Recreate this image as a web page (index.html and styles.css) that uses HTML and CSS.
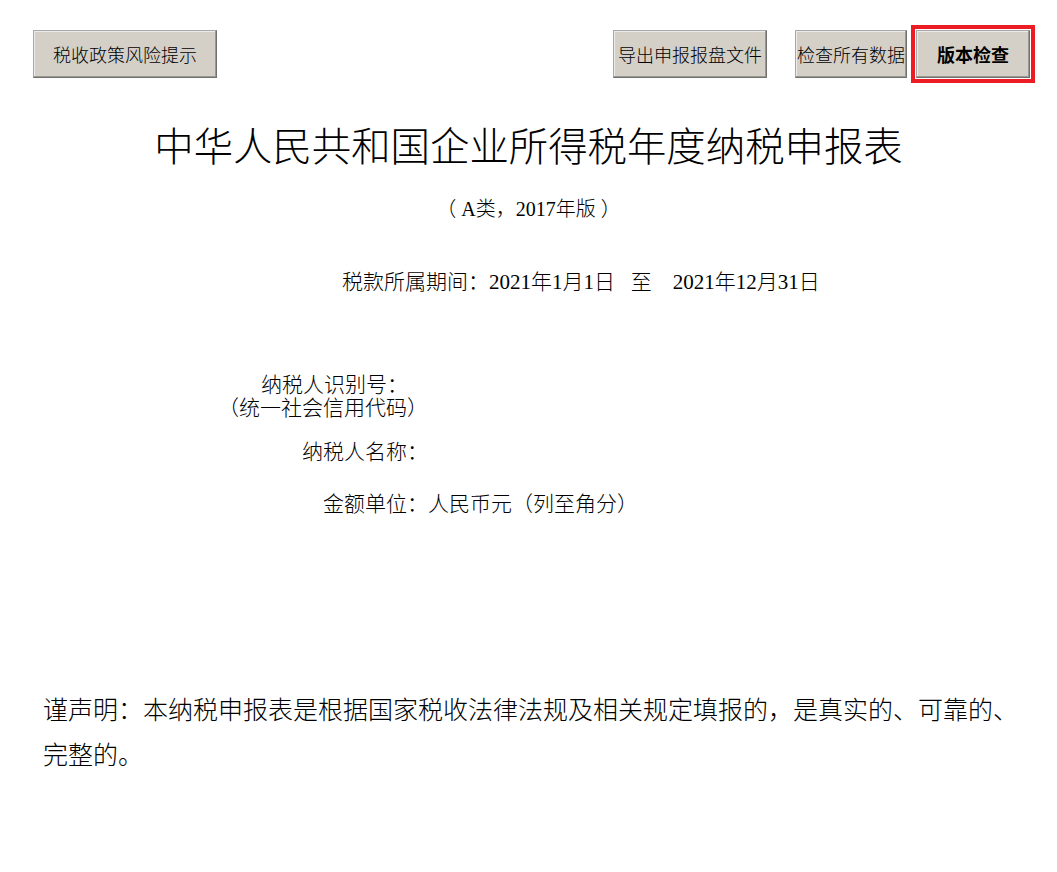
FILE: index.html
```html
<!DOCTYPE html>
<html lang="zh-CN">
<head>
    <meta charset="UTF-8">
    <title>中华人民共和国企业所得税年度纳税申报表</title>
    <link rel="stylesheet" href="styles.css">
</head>
<body>
    <div class="toolbar">
        <button class="btn btn-risk">税收政策风险提示</button>
        <div class="toolbar-right">
            <button class="btn btn-export">导出申报报盘文件</button>
            <button class="btn btn-check">检查所有数据</button>
            <div class="focus-ring">
                <button class="btn btn-version">版本检查</button>
            </div>
        </div>
    </div>

    <h1 class="title">中华人民共和国企业所得税年度纳税申报表</h1>
    <div class="subtitle">（ A类，2017年版 ）</div>

    <div class="period">税款所属期间：2021年1月1日&nbsp;&nbsp;&nbsp;至&nbsp;&nbsp;&nbsp;&nbsp;2021年12月31日</div>

    <div class="info">
        <div class="info-row">
            <div class="info-label">
                <div class="label-first">纳税人识别号：</div>
                <div>（统一社会信用代码）</div>
            </div>
            <div class="info-value"></div>
        </div>
        <div class="info-row row-name">
            <div class="info-label">纳税人名称：</div>
            <div class="info-value"></div>
        </div>
        <div class="info-row row-unit">
            <div class="info-label">金额单位：</div>
            <div class="info-value">人民币元（列至角分）</div>
        </div>
    </div>

    <p class="declare">谨声明：本纳税申报表是根据国家税收法律法规及相关规定填报的，是真实的、可靠的、完整的。</p>
</body>
</html>
```

FILE: styles.css
```css
body {
    margin: 0;
    background: #fff;
    color: #000;
    font-family: "Liberation Serif", "Noto Sans CJK SC", sans-serif;
    font-weight: 300;
}
.toolbar {
    display: flex;
    align-items: center;
    padding: 25px 22px 0 33px;
    height: 57px;
}
.toolbar-right {
    display: flex;
    align-items: center;
    margin-left: auto;
}
.btn {
    height: 48px;
    padding: 0;
    background: #d4d0c8;
    border: 1px solid #a8a8a8;
    border-right-color: #707070;
    border-bottom-color: #707070;
    box-shadow: inset -1px -1px 0 #9a9890, inset 1px 1px 0 #ecebe7;
    font-family: "Noto Sans CJK SC", sans-serif;
    font-weight: 300;
    font-size: 18px;
    color: #000;
    white-space: nowrap;
}
.btn-risk {
    width: 184px;
}
.btn-export {
    width: 154px;
}
.btn-check {
    width: 112px;
    margin-left: 28px;
}
.focus-ring {
    margin-left: 4px;
    border: 4px solid #ec1c24;
    padding: 1px;
    background: #fff;
}
.btn-version {
    width: 114px;
    font-weight: bold;
}
.title {
    margin: 43px 0 0;
    text-align: center;
    font-size: 39.4px;
    font-weight: 300;
    line-height: 47px;
}
.subtitle {
    margin-top: 25px;
    text-align: center;
    font-size: 20px;
    line-height: 24px;
}
.period {
    margin-top: 49px;
    padding-left: 342px;
    font-size: 21px;
    line-height: 24px;
}
.info {
    margin-top: 80px;
    font-size: 21px;
    line-height: 23px;
}
.info-row {
    display: grid;
    grid-template-columns: 428px 1fr;
}
.info-label {
    text-align: right;
}
.label-first {
    padding-right: 20px;
}
.row-name {
    margin-top: 21px;
}
.row-unit {
    margin-top: 29px;
}
.declare {
    margin: 172px 0 0;
    padding: 0 28px 0 43px;
    font-size: 25px;
    line-height: 45px;
}
```
